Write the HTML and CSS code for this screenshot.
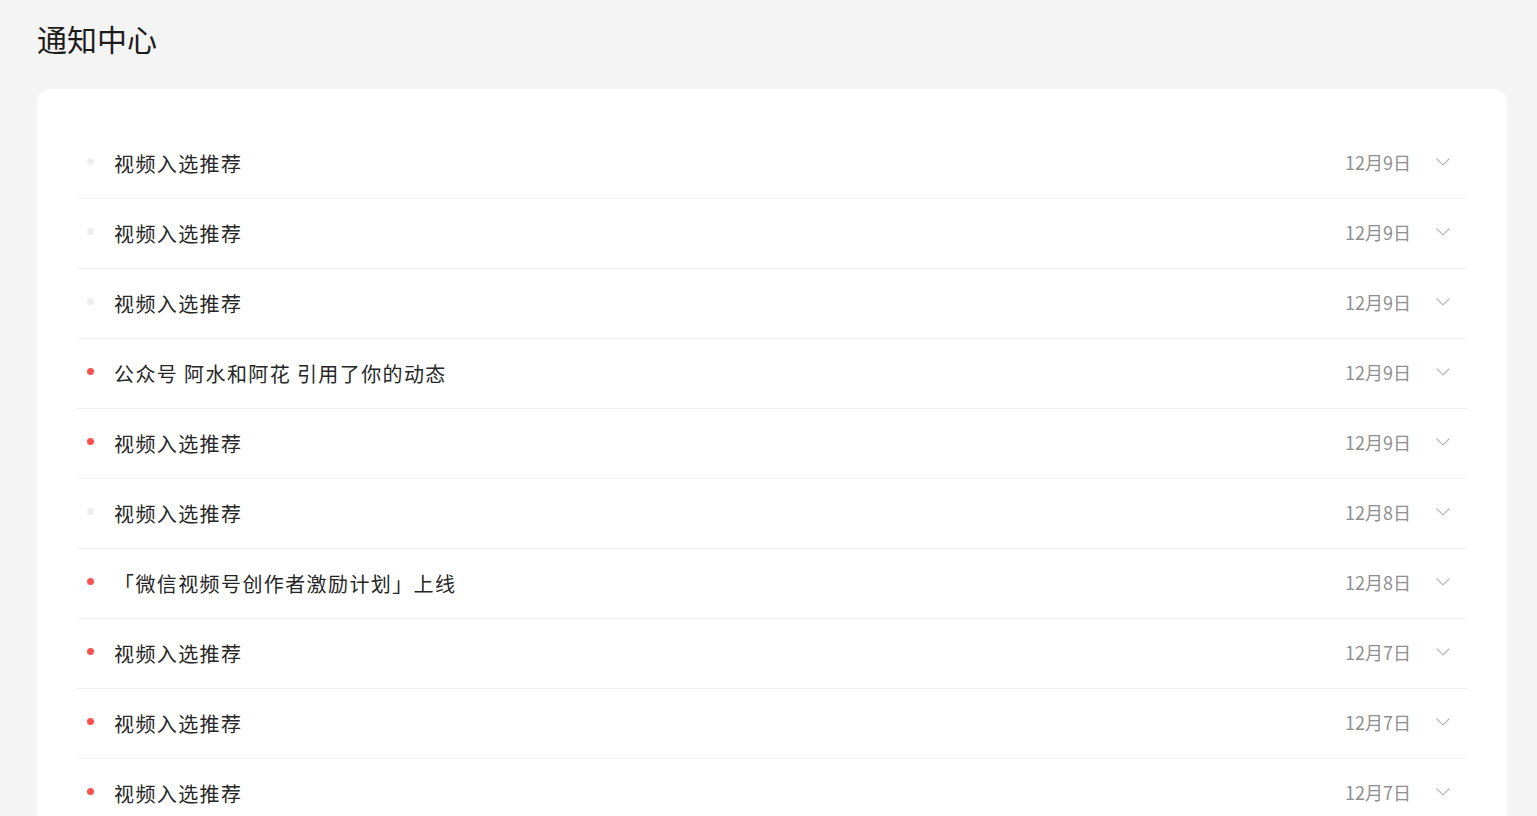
FILE: index.html
```html
<!DOCTYPE html>
<html lang="zh">
<head>
<meta charset="utf-8">
<title>通知中心</title>
<link rel="stylesheet" href="styles.css">
</head>
<body>
<div class="page">
  <h1 class="title">通知中心</h1>
  <div class="card">
    <ul class="list">
      <li class="row"><span class="dot"></span><span class="text">视频入选推荐</span><span class="date">12月9日</span><svg class="chev" viewBox="0 0 14 8"><path d="M0.5 0.5 L7 7 L13.5 0.5" /></svg></li>
      <li class="row"><span class="dot"></span><span class="text">视频入选推荐</span><span class="date">12月9日</span><svg class="chev" viewBox="0 0 14 8"><path d="M0.5 0.5 L7 7 L13.5 0.5" /></svg></li>
      <li class="row"><span class="dot"></span><span class="text">视频入选推荐</span><span class="date">12月9日</span><svg class="chev" viewBox="0 0 14 8"><path d="M0.5 0.5 L7 7 L13.5 0.5" /></svg></li>
      <li class="row"><span class="dot unread"></span><span class="text">公众号 阿水和阿花 引用了你的动态</span><span class="date">12月9日</span><svg class="chev" viewBox="0 0 14 8"><path d="M0.5 0.5 L7 7 L13.5 0.5" /></svg></li>
      <li class="row"><span class="dot unread"></span><span class="text">视频入选推荐</span><span class="date">12月9日</span><svg class="chev" viewBox="0 0 14 8"><path d="M0.5 0.5 L7 7 L13.5 0.5" /></svg></li>
      <li class="row"><span class="dot"></span><span class="text">视频入选推荐</span><span class="date">12月8日</span><svg class="chev" viewBox="0 0 14 8"><path d="M0.5 0.5 L7 7 L13.5 0.5" /></svg></li>
      <li class="row"><span class="dot unread"></span><span class="text">「微信视频号创作者激励计划」上线</span><span class="date">12月8日</span><svg class="chev" viewBox="0 0 14 8"><path d="M0.5 0.5 L7 7 L13.5 0.5" /></svg></li>
      <li class="row"><span class="dot unread"></span><span class="text">视频入选推荐</span><span class="date">12月7日</span><svg class="chev" viewBox="0 0 14 8"><path d="M0.5 0.5 L7 7 L13.5 0.5" /></svg></li>
      <li class="row"><span class="dot unread"></span><span class="text">视频入选推荐</span><span class="date">12月7日</span><svg class="chev" viewBox="0 0 14 8"><path d="M0.5 0.5 L7 7 L13.5 0.5" /></svg></li>
      <li class="row"><span class="dot unread"></span><span class="text">视频入选推荐</span><span class="date">12月7日</span><svg class="chev" viewBox="0 0 14 8"><path d="M0.5 0.5 L7 7 L13.5 0.5" /></svg></li>
    </ul>
  </div>
</div>
</body>
</html>
```

FILE: styles.css
```css
html, body {
  margin: 0;
  padding: 0;
  background: #f4f4f4;
  height: 100%;
  overflow: hidden;
}
body {
  font-family: "Noto Sans CJK SC", "Noto Sans", sans-serif;
  color: #1a1a1a;
}
.page {
  padding: 0 30px 0 37px;
}
.title {
  margin: 0;
  padding-top: 18px;
  height: 89px;
  box-sizing: border-box;
  font-size: 30px;
  font-weight: 400;
  line-height: 40px;
  color: #1c1c1c;
  letter-spacing: 0;
}
.card {
  background: #fff;
  border-radius: 14px;
  padding: 40px 40px 0 40px;
  min-height: 800px;
}
.list {
  list-style: none;
  margin: 0;
  padding: 0;
}
.row {
  display: flex;
  align-items: center;
  height: 69px;
  border-bottom: 1px solid #f0f0f0;
}
.dot {
  width: 7px;
  height: 7px;
  border-radius: 50%;
  background: #eeeeee;
  margin-left: 10px;
  margin-right: 20px;
  flex: none;
  position: relative;
  top: -2px;
}
.dot.unread {
  background: #fa5151;
}
.text {
  flex: 1;
  font-size: 20px;
  letter-spacing: 1.4px;
  color: #262626;
  position: relative;
  top: 0;
}
.date {
  font-size: 18px;
  color: #8f8f8f;
  margin-right: 25px;
  position: relative;
  top: -2px;
}
.chev {
  width: 14px;
  height: 8px;
  margin-right: 17px;
  fill: none;
  stroke: #b8b8b8;
  stroke-width: 1.2;
  flex: none;
  position: relative;
  top: -2px;
}
```
